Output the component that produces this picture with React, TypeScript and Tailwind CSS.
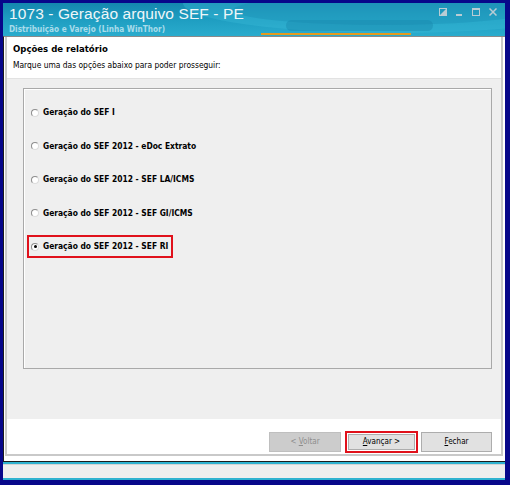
import React from "react"

const ui = "font-['DejaVu_Sans_Condensed','DejaVu_Sans',sans-serif]"

const options = [
  "Geração do SEF I",
  "Geração do SEF 2012 - eDoc Extrato",
  "Geração do SEF 2012 - SEF LA/ICMS",
  "Geração do SEF 2012 - SEF GI/ICMS",
  "Geração do SEF 2012 - SEF RI",
]

function Radio({ checked }: { checked?: boolean }) {
  return (
    <span className="w-[8px] h-[8px] rounded-full border border-t-[#8d8d8d] border-l-[#8d8d8d] border-r-[#dcdcdc] border-b-[#dcdcdc] bg-white flex items-center justify-center shrink-0">
      {checked && <span className="w-[3px] h-[3px] rounded-full bg-black" />}
    </span>
  )
}

function TitleBar() {
  return (
    <div className="relative h-[33px] shrink-0 overflow-hidden bg-[linear-gradient(180deg,#1487ae_0%,#1d9cc0_45%,#2aaccd_100%)]">
      {/* swoosh in the header art */}
      <div className="absolute left-[180px] top-[-30px] w-[420px] h-[60px] rounded-[50%] bg-[#39b8d6]/40" />
      <div className="absolute left-[230px] top-[-8px] w-[300px] h-[30px] rounded-[50%] bg-[#0f7ea6]/25" />
      <div className="absolute left-[283px] top-[17px] w-[147px] h-[11px] rounded-full bg-[#1785aa]/40" />
      <div className="absolute left-[258px] top-[30px] w-[150px] h-[2px] bg-[#e59a1f]" />

      <div className="relative pl-[6px] pt-[3px] leading-none">
        <div className="font-['Liberation_Sans',sans-serif] text-[15.5px] text-[#eef6f8] tracking-[0.1px]">
          1073 - Geração arquivo SEF - PE
        </div>
        <div className={`${ui} font-bold text-[8.2px] text-[#a9dceb] mt-[3px]`}>
          Distribuição e Varejo (Linha WinThor)
        </div>
      </div>

      {/* caption buttons */}
      <div className="absolute right-[8px] top-[5px] flex items-center gap-[9px] text-[#b9ccd4]">
        <svg width="8" height="8" viewBox="0 0 8 8">
          <rect x="0.5" y="0.5" width="7" height="7" fill="none" stroke="currentColor" />
          <path d="M1 7 L7 1 L7 7 Z" fill="currentColor" />
        </svg>
        <svg width="7" height="8" viewBox="0 0 7 8">
          <rect x="0" y="6" width="6" height="2" fill="currentColor" />
        </svg>
        <svg width="8" height="8" viewBox="0 0 8 8">
          <rect x="0.5" y="0.5" width="7" height="7" fill="none" stroke="currentColor" />
          <rect x="0" y="0" width="8" height="2" fill="currentColor" />
        </svg>
        <svg width="8" height="8" viewBox="0 0 8 8">
          <path d="M0.5 0.5 L7.5 7.5 M7.5 0.5 L0.5 7.5" stroke="currentColor" strokeWidth="1.5" />
        </svg>
      </div>
    </div>
  )
}

export default function App() {
  return (
    <div className={`w-[510px] h-[485px] bg-[#07078a] pt-[3px] pl-[3px] pr-[5px] pb-[5px] ${ui}`}>
      <div className="h-full flex flex-col bg-[#2fb2d0]">
        <TitleBar />

        {/* Main wizard panel */}
        <div className="h-[426px] shrink-0 bg-white border-l border-b border-[#1c1c1c] border-t border-t-[#8a8a8a] pl-px pr-[2px] pb-[5px]">
          <div className="h-full flex flex-col border-x-2 border-b-2 border-[#c9c9c9]">
            <div className="h-[41px] shrink-0 bg-white pl-[6px] pt-[6px]">
              <div className="font-bold text-[9.5px] text-black leading-[12px]">Opções de relatório</div>
              <div className="text-[8.4px] text-black leading-[10px] mt-[5px]">
                Marque uma das opções abaixo para poder prosseguir:
              </div>
            </div>

            <div className="h-[341px] shrink-0 bg-[#efefef] border-t border-[#e2e2e2] pt-[9px] pl-[16px] pr-[9px]">
              <div className="h-[281px] border border-[#a9a9a9] shadow-[inset_1px_1px_0_#fff] pt-[12px] pl-[3px]">
                <div className="flex flex-col gap-[10.5px]">
                  {options.map((label, i) => {
                    const selected = i === options.length - 1
                    return (
                      <div
                        key={label}
                        className={`h-[23px] w-[146px] flex items-center gap-[4px] pl-[2px] border-2 ${selected ? "border-[#e0111b]" : "border-transparent"}`}
                      >
                        <Radio checked={selected} />
                        <span className="font-bold text-[8.4px] text-black whitespace-nowrap">{label}</span>
                      </div>
                    )
                  })}
                </div>
              </div>
            </div>

            <div className="flex-1 bg-white flex justify-end items-start pt-[12px] pr-[9px]">
              <button className="w-[72px] h-[20px] mt-[1px] mr-[4px] bg-[#cccccc] border border-[#bfbfbf] text-[8px] text-[#8e8e8e] leading-none">
                &lt; <span className="underline">V</span>oltar
              </button>
              <div className="h-[22px] flex items-center border-2 border-[#e0111b] p-px mr-[3px]">
                <button className="w-[67px] h-[16px] bg-[#e1e1e1] border border-[#adadad] text-[8px] text-black leading-none">
                  <span className="underline">A</span>vançar &gt;
                </button>
              </div>
              <button className="w-[71px] h-[20px] mt-[1px] bg-[#e1e1e1] border border-[#adadad] text-[8px] text-black leading-none">
                <span className="underline">F</span>echar
              </button>
            </div>
          </div>
        </div>

        {/* status bar */}
        <div className="mt-[2px] h-[14px] shrink-0 bg-[#eeeeee] border-t border-[#d4d4d4]" />
      </div>
    </div>
  )
}
